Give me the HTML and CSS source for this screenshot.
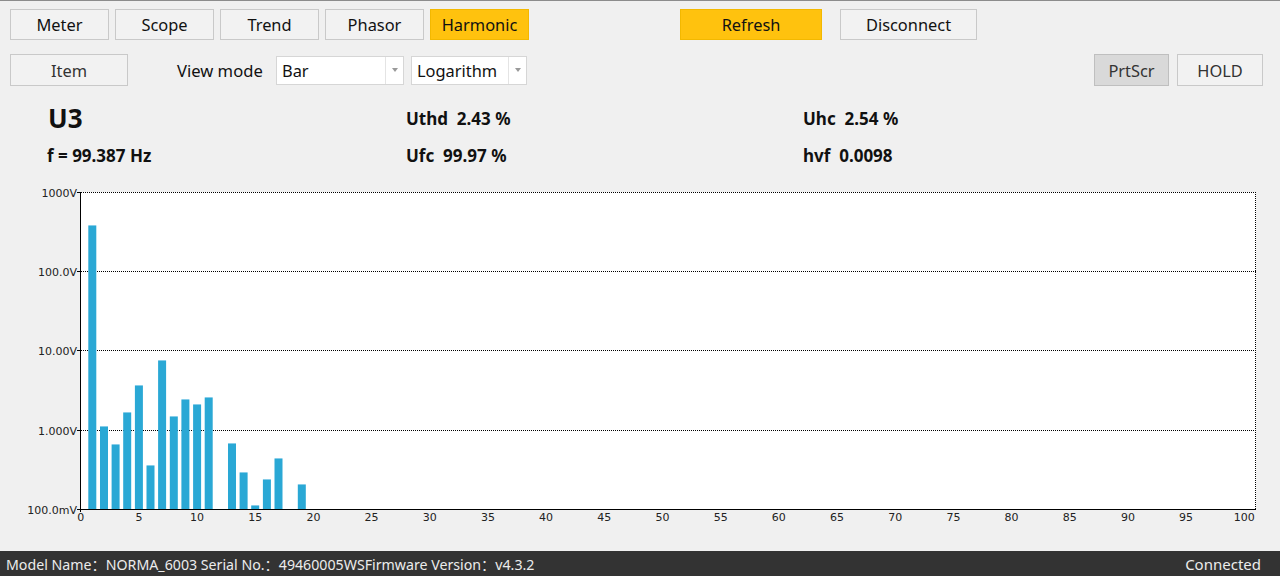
FILE: index.html
```html
<!DOCTYPE html>
<html>
<head>
<meta charset="utf-8">
<link rel="stylesheet" href="styles.css">
</head>
<body>
<div class="app">
  <div class="toolbar row1">
    <div class="tabs">
      <button class="btn tab">Meter</button>
      <button class="btn tab">Scope</button>
      <button class="btn tab">Trend</button>
      <button class="btn tab">Phasor</button>
      <button class="btn tab active">Harmonic</button>
    </div>
    <button class="btn refresh active">Refresh</button>
    <button class="btn disconnect">Disconnect</button>
  </div>
  <div class="toolbar row2">
    <button class="btn item">Item</button>
    <span class="label">View mode</span>
    <div class="combo combo-mode"><span class="value">Bar</span><span class="arrow"><i></i></span></div>
    <div class="combo combo-scale"><span class="value">Logarithm</span><span class="arrow"><i></i></span></div>
    <div class="spacer"></div>
    <button class="btn prt">PrtScr</button>
    <button class="btn hold">HOLD</button>
  </div>
  <div class="info">
    <div class="info-row row-a">
      <span class="channel">U3</span>
      <span class="metric">Uthd  2.43 %</span>
      <span class="metric">Uhc  2.54 %</span>
    </div>
    <div class="info-row row-b">
      <span class="metric">f = 99.387 Hz</span>
      <span class="metric">Ufc  99.97 %</span>
      <span class="metric">hvf  0.0098</span>
    </div>
  </div>
  <div class="chart">
    <svg class="plot" viewBox="0 180 1280 371" width="1280" height="371">
      <defs>
        <pattern id="ticks" x="80.7" y="0" width="11.635" height="20" patternUnits="userSpaceOnUse">
          <rect x="0" y="0" width="1" height="3" fill="#000"/>
        </pattern>
      </defs>
      <rect x="80.5" y="192" width="1175.5" height="317" fill="#fff"/>
      <g class="grid">
        <line x1="81" y1="192.5" x2="1256" y2="192.5"/>
        <line x1="81" y1="271.5" x2="1256" y2="271.5"/>
        <line x1="81" y1="350.5" x2="1256" y2="350.5"/>
        <line x1="81" y1="430.5" x2="1256" y2="430.5"/>
        <line x1="1255.5" y1="192" x2="1255.5" y2="509"/>
      </g>
      <g class="bars">
        <rect x="88.3" y="226" width="8" height="283"/>
        <rect x="100.0" y="427" width="8" height="82"/>
        <rect x="111.6" y="445" width="8" height="64"/>
        <rect x="123.2" y="413" width="8" height="96"/>
        <rect x="134.9" y="386" width="8" height="123"/>
        <rect x="146.5" y="466" width="8" height="43"/>
        <rect x="158.1" y="361" width="8" height="148"/>
        <rect x="169.8" y="417" width="8" height="92"/>
        <rect x="181.4" y="400" width="8" height="109"/>
        <rect x="193.1" y="405" width="8" height="104"/>
        <rect x="204.7" y="398" width="8" height="111"/>
        <rect x="228.0" y="444" width="8" height="65"/>
        <rect x="239.6" y="473" width="8" height="36"/>
        <rect x="251.2" y="506" width="8" height="3"/>
        <rect x="262.9" y="480" width="8" height="29"/>
        <rect x="274.5" y="459" width="8" height="50"/>
        <rect x="297.8" y="485" width="8" height="24"/>
      </g>
      <g class="caps">
        <rect x="88.3" y="225" width="8" height="1"/>
        <rect x="100.0" y="426" width="8" height="1"/>
        <rect x="111.6" y="444" width="8" height="1"/>
        <rect x="123.2" y="412" width="8" height="1"/>
        <rect x="134.9" y="385" width="8" height="1"/>
        <rect x="146.5" y="465" width="8" height="1"/>
        <rect x="158.1" y="360" width="8" height="1"/>
        <rect x="169.8" y="416" width="8" height="1"/>
        <rect x="181.4" y="399" width="8" height="1"/>
        <rect x="193.1" y="404" width="8" height="1"/>
        <rect x="204.7" y="397" width="8" height="1"/>
        <rect x="228.0" y="443" width="8" height="1"/>
        <rect x="239.6" y="472" width="8" height="1"/>
        <rect x="251.2" y="505" width="8" height="1"/>
        <rect x="262.9" y="479" width="8" height="1"/>
        <rect x="274.5" y="458" width="8" height="1"/>
        <rect x="297.8" y="484" width="8" height="1"/>
      </g>
      <g class="axis">
        <line x1="80.5" y1="192" x2="80.5" y2="512"/>
        <line x1="80" y1="509.5" x2="1256" y2="509.5"/>
        <line x1="77" y1="192.5" x2="80" y2="192.5"/>
        <line x1="77" y1="271.5" x2="80" y2="271.5"/>
        <line x1="77" y1="350.5" x2="80" y2="350.5"/>
        <line x1="77" y1="430.5" x2="80" y2="430.5"/>
        <line x1="77" y1="509.5" x2="80" y2="509.5"/>
      </g>
      <rect x="80" y="510" width="1170" height="3" fill="url(#ticks)"/>
      <g class="ylabels">
        <text x="77" y="196.5">1000V</text>
        <text x="77" y="275.5">100.0V</text>
        <text x="77" y="354.5">10.00V</text>
        <text x="77" y="434.5">1.000V</text>
        <text x="77" y="513.5">100.0mV</text>
      </g>
      <g class="xlabels">
        <text x="80.7" y="521">0</text>
        <text x="138.9" y="521">5</text>
        <text x="197.1" y="521">10</text>
        <text x="255.2" y="521">15</text>
        <text x="313.4" y="521">20</text>
        <text x="371.6" y="521">25</text>
        <text x="429.8" y="521">30</text>
        <text x="488.0" y="521">35</text>
        <text x="546.1" y="521">40</text>
        <text x="604.3" y="521">45</text>
        <text x="662.5" y="521">50</text>
        <text x="720.7" y="521">55</text>
        <text x="778.8" y="521">60</text>
        <text x="837.0" y="521">65</text>
        <text x="895.2" y="521">70</text>
        <text x="953.4" y="521">75</text>
        <text x="1011.6" y="521">80</text>
        <text x="1069.7" y="521">85</text>
        <text x="1127.9" y="521">90</text>
        <text x="1186.1" y="521">95</text>
        <text x="1244.2" y="521">100</text>
      </g>
    </svg>
  </div>
  <div class="status">
    <span class="status-info">Model Name：NORMA_6003 Serial No.：49460005WSFirmware Version：v4.3.2</span>
    <span class="status-state">Connected</span>
  </div>
</div>
</body>
</html>
```

FILE: styles.css
```css
html, body {
  margin: 0;
  padding: 0;
}

body {
  background: #f0f0f0;
  font-family: "Noto Sans", "Noto Sans CJK SC", sans-serif;
  color: #111;
}

.app {
  width: 1280px;
  height: 576px;
  display: flex;
  flex-direction: column;
  border-top: 1px solid #8c8c8c;
  box-sizing: border-box;
  overflow: hidden;
}

.toolbar {
  display: flex;
  align-items: center;
  padding-left: 10px;
}

.row1 {
  margin-top: 8px;
  height: 31px;
}

.tabs {
  display: flex;
  gap: 6px;
}

.btn {
  box-sizing: border-box;
  height: 31px;
  padding: 2px 0 0;
  border: 1px solid #c9c9c9;
  background: #f2f2f2;
  font-family: "Noto Sans", sans-serif;
  font-size: 16.4px;
  color: #111;
  line-height: 1;
}

.tab {
  width: 99px;
}

.btn.active {
  background: #ffc20e;
  border-color: #f3b800;
}

.refresh {
  margin-left: 151px;
  width: 142px;
}

.disconnect {
  margin-left: 18px;
  width: 137px;
}

.row2 {
  margin-top: 14px;
  height: 32px;
  padding-right: 17px;
}

.item {
  width: 118px;
  height: 32px;
  color: #333;
  padding-top: 2px;
}

.label {
  margin-left: 49px;
  width: 99px;
  font-size: 16.6px;
}

.combo {
  box-sizing: border-box;
  height: 29px;
  background: #fff;
  border: 1px solid #d6d6d6;
  display: flex;
  align-items: center;
  font-size: 16.4px;
}

.combo-mode {
  width: 128px;
}

.combo-scale {
  width: 116px;
  margin-left: 7px;
}

.combo .value {
  flex: 1;
  padding-left: 5px;
}

.combo .arrow {
  width: 17px;
  align-self: stretch;
  border-left: 1px solid #e4e4e4;
  display: flex;
  align-items: center;
  justify-content: center;
}

.combo .arrow i {
  width: 0;
  height: 0;
  border-left: 3.5px solid transparent;
  border-right: 3.5px solid transparent;
  border-top: 4px solid #9a9a9a;
}

.spacer {
  flex: 1;
}

.prt {
  width: 75px;
  height: 32px;
  background: #d9d9d9;
  border-color: #bfbfbf;
  color: #333;
  padding-top: 3px;
}

.hold {
  width: 86px;
  height: 32px;
  margin-left: 8px;
  color: #333;
  padding-top: 3px;
}

.info {
  height: 94px;
  box-sizing: border-box;
  padding-top: 14px;
}

.info-row {
  display: grid;
  grid-template-columns: 357px 397px 1fr;
  padding-left: 49px;
  align-items: center;
}

.row-a {
  height: 36px;
}

.row-b {
  height: 28px;
  margin-top: 5px;
}

.channel {
  font-size: 26px;
  font-weight: 700;
  margin-left: -1px;
}

.metric {
  font-size: 17px;
  font-weight: 700;
  white-space: pre;
}

.row-b .metric:first-child {
  margin-left: -2px;
}

.chart {
  height: 371px;
}

.plot {
  display: block;
}

.grid line {
  stroke: #000;
  stroke-width: 1;
  stroke-dasharray: 1 1;
}

.axis line {
  stroke: #000;
  stroke-width: 1;
}

.bars rect {
  fill: #2aa8d5;
}

.caps rect {
  fill: #86cde9;
}

.ylabels text {
  font-family: "DejaVu Sans", sans-serif;
  font-size: 11px;
  fill: #222;
  text-anchor: end;
}

.xlabels text {
  font-family: "DejaVu Sans", sans-serif;
  font-size: 11px;
  fill: #222;
  text-anchor: middle;
}

.status {
  height: 25px;
  background: #333333;
  color: #ececec;
  display: flex;
  align-items: center;
  justify-content: space-between;
  padding: 0 19px 0 6px;
  font-size: 14.2px;
}

.status-state {
  font-size: 15px;
}
```
